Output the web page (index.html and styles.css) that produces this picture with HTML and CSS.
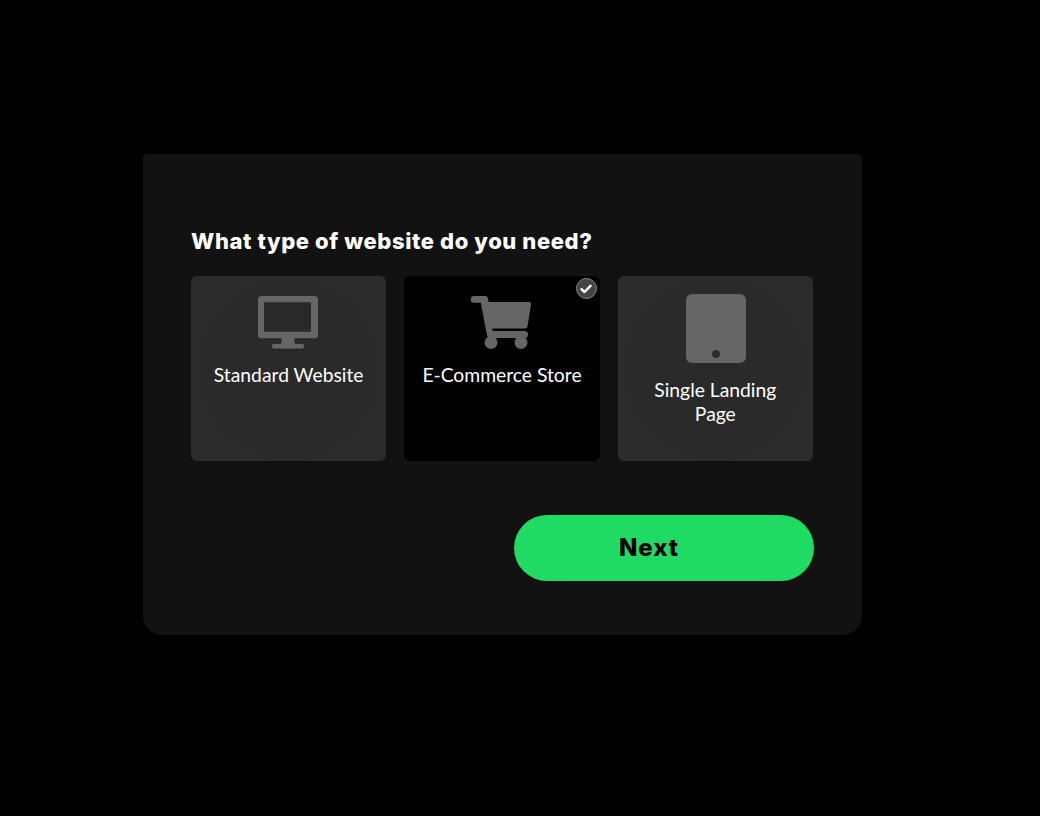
FILE: index.html
```html
<!DOCTYPE html>
<html lang="en">
  <head>
    <meta charset="UTF-8" />
    <meta name="viewport" content="width=device-width, initial-scale=1.0" />
    <title>Website Type</title>
    <link rel="stylesheet" href="styles.css">
  </head>
  <body>
    <div class="card">
      <h2 class="question">What type of website do you need?</h2>
      <div class="options">
        <div class="option">
          <svg class="icon icon-monitor" width="60" height="55" viewBox="0 0 60 55">
            <path fill="#666" fill-rule="evenodd" d="M3.500 2H56.500a3.500 3.500 0 0 1 3.500 3.500V40.800a3.500 3.500 0 0 1-3.500 3.500H36L37 50H44a2.200 2.200 0 0 1 0 4.400H16a2.200 2.200 0 0 1 0-4.400H23L24 44.300H3.500A3.500 3.500 0 0 1 0 40.800V5.500A3.500 3.500 0 0 1 3.500 2ZM6 8.300V37.700H53V8.300Z"/>
          </svg>
          <span class="label">Standard Website</span>
        </div>
        <div class="option selected">
          <span class="check">
            <svg width="12" height="10" viewBox="0 0 12 10">
              <path fill="none" stroke="#fff" stroke-width="2.400" stroke-linecap="round" stroke-linejoin="round" d="M1.500 5.200 4.500 8 10.500 1.800"/>
            </svg>
          </span>
          <svg class="icon" width="62" height="55" viewBox="0 0 62 55">
            <path fill="#666" d="M3 2H14a3 3 0 0 1 3 2.400L17.700 8H58a2 2 0 0 1 2 2.400L56.500 32.500a2.500 2.500 0 0 1-2.500 2H21.300L21.700 37H53.500a3.500 3.500 0 0 1 0 7H19a3 3 0 0 1-3-2.400L9.800 8.700H3a3.300 3.300 0 0 1 0-6.700Z"/>
            <circle fill="#666" cx="20" cy="48.500" r="6.500"/>
            <circle fill="#666" cx="50" cy="48.500" r="6.500"/>
          </svg>
          <span class="label">E-Commerce Store</span>
        </div>
        <div class="option">
          <svg class="icon icon-tablet" width="60" height="69" viewBox="0 0 60 69">
            <rect fill="#666" width="60" height="69" rx="6"/>
            <circle fill="#2b2b2b" cx="30" cy="60" r="4"/>
          </svg>
          <span class="label">Single Landing Page</span>
        </div>
      </div>
      <div class="actions">
        <button class="next">Next</button>
      </div>
    </div>
  </body>
</html>
```

FILE: styles.css
```css
body {
  margin: 0;
  background-color: #000;
  font-family: "Lato", sans-serif;
  padding: 154px 0 0 143px;
}
.card {
  box-sizing: border-box;
  width: 719px;
  height: 481px;
  background-color: #121212;
  border-radius: 4px 4px 20px 20px;
  padding: 75px 48px 54px;
}
.question {
  margin: 0 0 23px;
  color: #fff;
  font-family: "Inter", sans-serif;
  font-size: 22px;
  font-weight: 800;
  line-height: 24px;
  letter-spacing: 0.6px;
}
.options {
  display: grid;
  grid-template-columns: repeat(3, 1fr);
  gap: 18px;
  width: 622px;
}
.option {
  position: relative;
  box-sizing: border-box;
  height: 185px;
  padding: 18px 15px 0;
  display: flex;
  flex-direction: column;
  align-items: center;
  text-align: center;
  border-radius: 6px;
  background: radial-gradient(circle closest-side, #2a2a2a 0, #2a2a2a 97%, #2b2b2b 100%);
}
.option.selected {
  background: #000;
}
.icon {
  display: block;
  flex: none;
  margin-bottom: 14px;
}
.icon-monitor {
  margin-right: 1px;
}
.icon-tablet {
  margin-left: 1px;
  margin-bottom: 15px;
}
.label {
  color: #fff;
  font-size: 19.300px;
  line-height: 24px;
}
.check {
  position: absolute;
  top: 2px;
  right: 3px;
  box-sizing: border-box;
  width: 21px;
  height: 21px;
  display: flex;
  align-items: center;
  justify-content: center;
  border: 1px solid #888;
  border-radius: 50%;
  background-color: #444;
}
.actions {
  display: flex;
  justify-content: flex-end;
  margin-top: 54px;
}
.next {
  width: 300px;
  height: 66px;
  padding: 0 30px 1px 0;
  border: none;
  border-radius: 33px;
  background-color: #1fdb64;
  color: #000;
  font-family: "Inter", sans-serif;
  font-size: 24px;
  font-weight: 800;
  letter-spacing: 1px;
}
```
